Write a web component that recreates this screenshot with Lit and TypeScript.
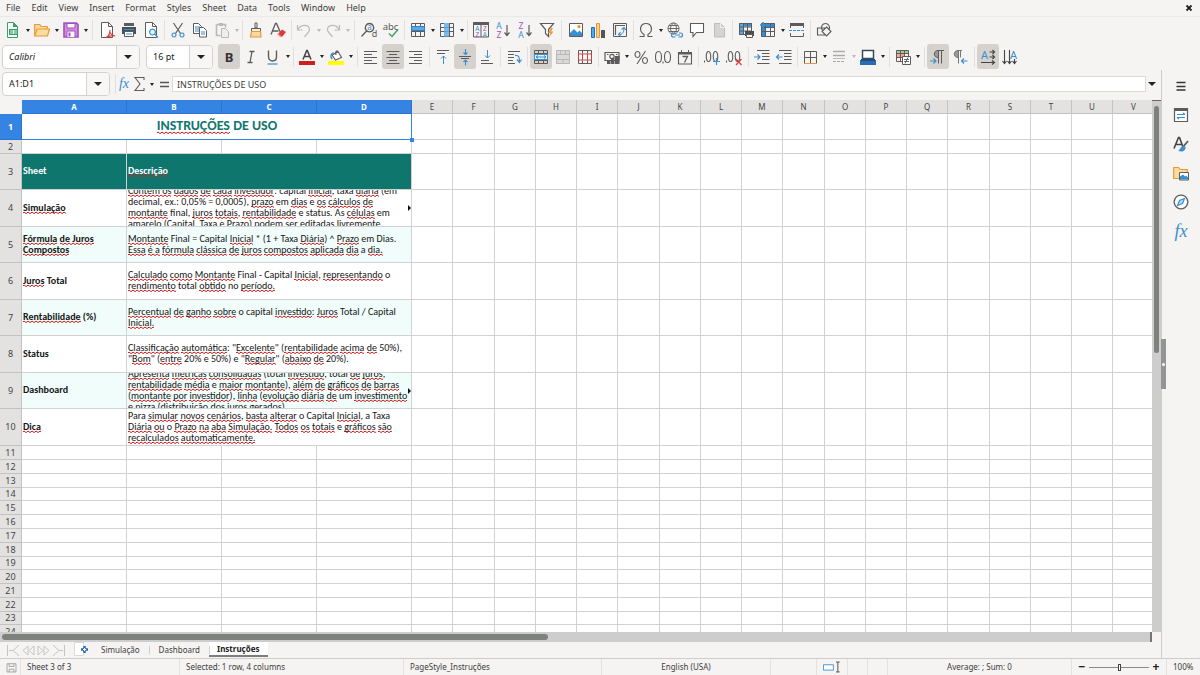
import { LitElement, html, svg, css, nothing, TemplateResult, SVGTemplateResult } from "lit";
import { customElement, property } from "lit/decorators.js";
import { classMap } from "lit/directives/class-map.js";
import { styleMap } from "lit/directives/style-map.js";

const D = "#5c5c5c";
const B = "#3a8fd0";
const R = "#dd3b3b";
const G = "#38a169";
const O = "#e8983a";
const P = "#a44fbd";
const L = "#b9b9b9";

const s = (d: string, c = D, w = 1, fill = "none") =>
  svg`<path d=${d} stroke=${c} stroke-width=${w} fill=${fill}></path>`;
const f = (d: string, c = D) => svg`<path d=${d} fill=${c}></path>`;
const t = (x: number, y: number, size: number, c: string, text: string, anchor = "middle") =>
  svg`<text x=${x} y=${y} font-size=${size} fill=${c} text-anchor=${anchor}>${text}</text>`;

const page = "M2.5 .5h7l4 4v11h-11z";
const grid = "M1.5 1.5h13v13h-13zM1.5 5.5h13M1.5 9.5h13M5.5 1.5v13M10.5 1.5v13";

const icons: Record<string, () => SVGTemplateResult | SVGTemplateResult[]> = {
  new: () => [s("M2.5 .5h6l4 4v11h-10z", G, 1, "#fff"), f("M8 0l5 5h-5z", G), f("M4 7h9v6h-9z", G), s("M5 9h7M5 11h7M8.5 8v4", "#d8f3e2")],
  open: () => [s("M.7 13.5v-11h5l1.5 2h6v3", O, 1.2, "#fbdc9f"), s("M.7 14l2.5-7h12.3l-2 7z", O, 1.2, "#fbdc9f")],
  save: () => [s("M1 1h12.5l1.5 1.5v12.500h-14z", P, 1.6, "#cf8ddd"), s("M4 1.500h8v4.500h-8z", P, 1, "#fff"), s("M4 15v-6h8v6", P, 1, "#fff"), f("M5.500 10.500h2v4h-2z", P)],
  pdf: () => [s("M2.5 .5h7l4 4v11h-11z", D, 1, "#fff"), s("M9.500 .5v4h4"), s("M7 15.500c2-1 4-4 4-7.500-1 3 2 5.500 5 6-3-1-6 0-9 1.500z", R, 1.1)],
  print: () => [f("M3 1h10v3h-10z", D), f("M1 5h14v7h-14z", "#4a4f55"), s("M3.500 9.500h9v5h-9z", D, 1, "#fff"), s("M3 7.500h10", B), s("M5 12h6", B)],
  preview: () => [s(page, D, 1, "#fff"), s("M9.500 .5v4h4"), s("M9.500 7.200a2.900 2.900 0 1 0 .01 0M11.500 12l3.500 3.500", B, 1.200, "#e6f2fb")],
  cut: () => [s("M3.500 1l7 10.500M12.500 1l-7 10.500", D, 1.200), s("M4 11a2 2 0 1 0 .01 0M12 11a2 2 0 1 0 .01 0", B, 1.200)],
  copy: () => [s("M1.500 1.500h5l3 3v7h-8z", D, 1, "#fff"), s("M3 5h5M3 7h4M3 9h4", B), s("M7.500 5.500h4l3 3v6.500h-7z", D, 1, "#fff"), s("M9 10h4M9 12h4", B)],
  paste: () => [s("M2.500 2.500h9v3M2.500 2.500v11h4", L, 1.600), f("M5 1h4v3h-4z", L), s("M7.500 6.500h4l3 3v6h-7z", L, 1, "#eee")],
  brush: () => [s("M7 1h2v5h-2zM3.500 6.500h9v3h-9z", D, 1, "#f4f1ea"), s("M3.500 9.500l-1 5.500h10.500l-.5-5.500z", O, 1.200, "#fbd9a0")],
  clear: () => [s("M1 12.500l4.500-11h1l4 9M2.500 9h6", D, 1.300), f("M8 12l4-4.500 4 2.500-4 5z", R), f("M7 12.500l1-1 3.500 3.500-1 .5z", "#f2a0a0")],
  undo: () => [s("M1.500 3v5h5M1.500 8c3-6 11-6 12-1 .5 3-3 5-5 8", L, 1.200)],
  redo: () => [s("M14.500 3v5h-5M14.500 8c-3-6-11-6-12-1-.5 3 3 5 5 8", L, 1.200)],
  find: () => [s("M8.500 1.500a4.200 4.200 0 1 0 .01 0M5.500 9l-5 5.500", D, 1.300), t(8.500, 8.300, 8, B, "a"), t(13.500, 15, 9, D, "d")],
  spell: () => [t(7.500, 7.500, 9.500, D, "abc"), s("M6 11.500l3 3 6-7", G, 1.400)],
  row: () => [s(grid), f("M1 4.500h13.500v4h-13.500z", "#58a9e6"), s("M1 4.500h14M1 8.500h14M1.500 4v5M14.500 4v5", "#2f7fc4")],
  col: () => [s(grid), f("M5 1h5v13.500h-5z", "#79baea"), s("M5 5.500h5M5 9.500h5", "#5b9fd6")],
  sort: () => [s("M.5 1.500h15v13.500h-15zM8 1v14"), f("M0 0h16v3h-16z", D), t(4.300, 9, 6.500, B, "A"), t(4.300, 15, 6.500, P, "Z"), t(11.800, 9, 6.500, P, "Z"), t(11.800, 15, 6.500, B, "A")],
  az: () => [t(4, 7.300, 8.500, B, "A"), t(4, 15.500, 8.500, P, "Z"), s("M12 3v10M9.500 10.500l2.500 3 2.500-3", D, 1.200)],
  za: () => [t(4, 7.300, 8.500, P, "Z"), t(4, 15.500, 8.500, B, "A"), s("M12 3v10M9.500 10.500l2.500 3 2.500-3", D, 1.200)],
  filter: () => [s("M1.500 1.500h13l-5 6v7l-3-3v-4z", D, 1.200, "#fff"), f("M12 6l-3 5h2.500l-1.500 4.500 4.500-6h-2.500l2-3.500z", O)],
  image: () => [s("M1.500 1.500h13v13h-13z", D, 1, "#fff"), f("M2 14v-3l4-4 3.500 3.500 2-2 2.500 2.500v3z", B), f("M11 3a1.600 1.600 0 1 0 .01 0", O)],
  chart: () => [s("M1.500 5.500h3v10h-3z", "#1f6fb5", 1, "#58a9e6"), s("M6.500 1.500h3v14h-3z", O, 1, "#fbd08a"), f("M11 8h4v8h-4z", "#555")],
  pivot: () => [s("M1.500 1.500h13v13h-13z"), s("M3 3.500h10M3.500 3v10", D, 1.200), s("M6.500 12.500c4.500 0 5.500-2 5.500-6M9.500 7.500l2.500-2 2 2.500M8.500 10l-2 2.500 2.500 2", B, 1.100)],
  omega: () => [s("M1.500 14.500h4.500v-2c-6-4-3.500-11 2-11s8 7 2 11v2h4.500", D, 1.200)],
  link: () => [s("M6.500 1a5.500 5.500 0 1 0 .01 0M6.500 1c-4 3-4 8 0 11M6.500 1c4 3 4 8 0 11M1 6.500h11M2 3.500h9M2 9.500h9", D, .900), s("M8 11h-1.500a2 2 0 0 0 0 4h2M12 11h1.500a2 2 0 0 1 0 4h-2M8 13h5", B, 1.200)],
  comment: () => [s("M1.500 1.500h13v9h-7l-3.500 4v-4h-2.500z", D, 1.100, "#fff")],
  blank: () => [s("M3.500 1.500h6l4 4v9.500h-10z", "#bdbdbd", 1, "#d4d4d4"), s("M9.500 1.500v4h4", "#eee")],
  printarea: () => [f("M1 1h13v3.500h-13z", B), f("M1 1h4v12h-4z", "#58a9e6"), s("M1.500 1.500h12v11h-12zM1.500 5h12M1.500 9h12M5.500 1.500v11M9.500 1.500v11"), f("M7 9h9v5h-9z", "#4a4f55"), s("M8.500 12.500h6v3h-6z", D, 1, "#fff")],
  freeze: () => [f("M1 1h13.500v4.500h-13.500zM1 1h4.500v13.500h-4.500z", "#2f8de0"), s(grid), s("M3 0v6M0 3h6", B, 1.500)],
  split: () => [s("M1.500 6v-4.500h13v4.500M1.500 11v3.500h13v-3.500"), f("M1 1h14v3h-14z"), svg`<path d="M0 8.500h16" stroke=${B} stroke-dasharray="3 1" fill="none"></path>`],
  shapes: () => [s("M1.500 6h7v7h-7z", D, 1.100), s("M9.500 1.500a4 4 0 1 0 .01 0", D, 1.100), s("M10.500 5l4.500 4.500-4.500 4.500-4.500-4.500z", D, 1.100, "#f4f4f4")],
  bold: () => t(8, 13, 13, "#333", "B"),
  italic: () => [s("M6.500 2.500h5M4.500 13.500h5M9 2.500l-2 11", D, 1.300)],
  underline: () => [s("M3.500 1.500v6c0 6 8 6 8 0v-6", D, 1.400), s("M2.500 15h10", B, 1.200)],
  fontcolor: () => [s("M4 10.500l3.700-9h.6l3.700 9M5.500 7.500h5", "#444", 1.500), f("M0 12h16v4h-16z", "#c9211e")],
  fill: () => [s("M5 5.500l5-3 3.500 6-6 2.500-3.500-5z", D, 1.100, "#fff"), s("M4 10c-2-3-1-5.500 2-6", B, 1.500), s("M8 6c-1-5 2-5 2-2", D, 1.200), f("M0 12h16v4h-16z", "#ffff00")],
  left: () => s("M1 2.500h13M1 5.500h8M1 8.500h13M1 11.500h8M1 14.500h13"),
  center: () => s("M1.500 2.500h13M4 5.500h8M1.500 8.500h13M4 11.500h8M1.500 14.500h13"),
  right: () => s("M2 2.500h13M7 5.500h8M2 8.500h13M7 11.500h8M2 14.500h13"),
  top: () => [s("M2 1.500h12M2 4.500h8", D), s("M8.500 7v8M6 9.500l2.500-2.500 2.500 2.500", B)],
  middle: () => [s("M2 7.500h12M4 9.500h8"), s("M8.500 0v5.500M6.500 3.500l2 2 2-2M8.500 16.500v-5M6.500 13l2-2 2 2", B, 1.100)],
  bottom: () => [s("M2 11.500h8M2 14.500h12"), s("M8.500 1v8M6 6.500l2.500 2.500 2.500-2.500", B)],
  wrap: () => [s("M2 2.500h12M2 5.500h6M2 8.500h6M2 11.500h5M2 14.500h7"), s("M9 6.500c4-.5 4.500 2 4.500 6M11 10.500l2.500 3 2-3", B, 1.200)],
  merge: () => [s("M1.500 1.500h13v13h-13zM1.500 4.500h13M1.500 11.500h13M5.500 1.500v3M10.500 1.500v3M5.500 11.500v3M10.500 11.500v3", D), s("M1.500 5.500h13v5h-13zM3 8h10M5 6.500l-2 1.500 2 1.500M11 6.500l2 1.500-2 1.500", B, 1, "#e6f2fb")],
  unmerge: () => [f("M1 1h14v14h-14z", "#d9d9d9"), s("M1.500 1.500h13v13h-13zM1.500 5.500h13M1.500 10.500h13M5.500 1.500v4M10.500 1.500v4M8 10.500v4", L)],
  splitcell: () => [s("M1.500 1.500h13v13h-13zM5.500 1.500v3M10.500 1.500v3M5.500 11.500v3M10.500 11.500v3"), s("M1.500 5h13v6h-13zM5.500 5v6M10.500 5v6", R, 1, "#fff")],
  currency: () => [s("M1 3.500h14v8h-14z", D, 1.200), s("M8 5.300a2.200 2.200 0 1 0 .01 0M3 5.500h1.500M12 5.500h1.500", D, 1.200), f("M7 9h3.500v6h-3.500zM11 7h4.500v8h-4.500zM3 12h3.500v3h-3.500z")],
  percent: () => [s("M4.500 2.500a2.500 3 0 1 0 .01 0M12 8.500a2.500 3 0 1 0 .01 0M12.500 2l-8.500 13", D, 1.100)],
  number: () => [s("M3.500 2.500c-4 0-4 11 0 11s4-11 0-11M12.500 2.500c-4 0-4 11 0 11s4-11 0-11M8 12.500v2", D, 1.100)],
  date: () => [s("M1.500 3.500h13v11.500h-13z", D, 1.100), s("M1 4.500h14", D, 2), s("M4.500 1v3M11.500 1v3"), s("M5.500 7.500h5l-3 6", D, 1.300)],
  adddec: () => [s("M4.500 2.500c-3 0-3 10 0 10s3-10 0-10M11.500 2.500c-3 0-3 10 0 10s3-10 0-10M.5 11.500v2", D, 1.100), s("M12.500 9v7M9 12.500h7", B, 1.200)],
  deldec: () => [s("M4.500 2.500c-3 0-3 10 0 10s3-10 0-10M11.500 2.500c-3 0-3 10 0 10s3-10 0-10M.5 11.500v2", D, 1.100), s("M10 10l5.500 6M15.500 10l-5.500 6", R, 1.200)],
  indent: () => [s("M3 1.500h12.500M8 4.500h7.500M8 7.500h7.500M8 10.500h7.500M3 14.500h12.500"), s("M0 8h6M3.500 5.500l2.500 2.500-2.500 2.500", B, 1.200)],
  outdent: () => [s("M3 1.500h12.500M8 4.500h7.500M8 7.500h7.500M8 10.500h7.500M3 14.500h12.500"), s("M.5 8h6M3 5.500l-2.500 2.500 2.500 2.500", B, 1.200)],
  borders: () => [s("M2.500 14.500v-12h12v12M8.500 2v13M2 8.500h12", D, 1), s("M2 14.500h13", O)],
  borderstyle: () => [s("M2 2.500h12M2 6.500h12", "#aaa", 1.500), s("M2 9.500h12", "#bbb"), s("M2 12.500h3M6 12.500h3M10 12.500h3", "#aaa")],
  bordercolor: () => [s("M2.500 1.500h11v8h-11z", "#3a4b5c", 1.500, "#fff"), f("M0 11h16v5h-16z", "#2b6cb0"), f("M1 10h14v2h-14z", "#1c4e80")],
  conditional: () => [f("M1 1h13v3.500h-13z", "#8fd3a5"), f("M1 5h9v4h-9z", "#f0a59d"), s("M1.500 1.500h12v11h-12zM1.500 4.500h12M1.500 8.500h12M5.500 1.500v11M9.500 1.500v11", "#6b5a55"), s("M7.500 7.500h8v8h-8z", D, 1, "#fff"), s("M9 10.500h5M9 12.500h5M13 8.500l-3 6", D, .900)],
  ltr: () => [f("M8 1.500c-5 0-5 7 0 7z", "#999"), s("M14 1.500h-6c-5 0-5 7 0 7M8.500 1.500v13M11.500 1.500v13"), s("M0 12h6M3.500 9.500l2.500 2.500-2.500 2.500", B, 1.200)],
  rtl: () => [f("M6 1.500c-5 0-5 7 0 7z", "#999"), s("M10 1.500h-4c-5 0-5 7 0 7M6.500 1.500v13M8.500 1.500v7", "#777"), s("M9.500 12h6M12 9.500l-2.500 2.500 2.500 2.500", B, 1.200)],
  horiz: () => [t(4.500, 9.500, 11, B, "A"), s("M9.500 3h5M12.500 1l2 2-2 2M9.500 8h5M12.500 6l2 2-2 2M1 13.500h13.500M12 11.500l2.500 2-2.500 2", "#444", 1.100)],
  vert: () => [t(11.500, 9.500, 11, B, "A"), s("M2.500 1v13.500M.5 12l2 2.500 2-2.500M7.500 1v13.500M5.500 12l2 2.500 2-2.500M12.500 10v4.500M10.500 12l2 2.500 2-2.500", "#444", 1.100)],
  menu: () => s("M3.500 4.500h9M3.500 8.500h9M3.500 12h9", "#333", 1.500),
  properties: () => [s("M1.500 1.500h13v13h-13z", D, 1.200, "#fff"), f("M1 1h14v3h-14z"), s("M4 7.500h8M10 6l2 1.500M4 10.500h8M6 12l-2-1.500", B, 1.200)],
  stylesdeck: () => [s("M1 12.500l4.500-11h1l4 11M2.500 8.500h7", "#444", 1.600), s("M15 5l-5 6", D, 1.800), f("M11 10c-4 0-3 4-6 4.500 4 2.500 8 0 7.500-3.500z", B)],
  gallery: () => [s("M.7 13.500v-11h5l1.500 2h7v9z", O, 1.200, "#fbdc9f"), s("M6.500 7.500h9v7.500h-9z", D, 1, "#fff"), f("M7 14.500v-3l3-2 2 2 1-1 2 2v2z", B)],
  navigator: () => [s("M8 1.200a6.800 6.800 0 1 0 .01 0", D, 1.200, "#fff"), s("M11.500 4.500l-2 5-5 2 2-5z", B, 1.200, "#b8dcf5")],
  sigma: () => s("M12 4v-2.500h-9l5 6.500-5 6.500h9v-2.500", D, 1.100),
  equal: () => s("M4 6.500h9M4 10.500h9", "#555", 1.500),
  floppy: () => [s("M1.500 2.500h13v12h-13zM4.500 2.500v4h7v-4M4.500 14.500v-4h7v4", "#999", 1.200)],
};

const rich = (text: string): (TemplateResult | string)[] =>
  text.split("_").map((part, i) => (i % 2 ? html`<span class="typo">${part}</span>` : part));

@customElement("x-icon")
class XIcon extends LitElement {
  @property() name = "";
  static styles = css`
    :host { display: block; width: 16px; height: 16px; flex: none; }
    svg { display: block; width: 100%; height: 100%; overflow: visible; font-family: "Noto Sans", sans-serif; }
    .strong { font-weight: 700; }
  `;
  render() {
    return html`<svg viewBox="0 0 16 16" class=${classMap({ strong: this.name === "bold" })} aria-hidden="true">${icons[this.name]?.()}</svg>`;
  }
}

const bar1 = "new> open> save> |7 pdf print preview |5 cut copy paste>- |5 brush clear |4 undo>- redo>- |7 find spell |5 row> col> |5 sort az za filter |7 image chart pivot |4 omega> link comment blank |5 printarea freeze> split |5 shapes";
const bar2 = "bold* italic underline> |5 fontcolor> fill> |6 left center* right |6 top middle* bottom |5 wrap |5 merge* unmerge splitcell |5 currency> percent number date |5 adddec deldec |6 indent outdent |4 borders> borderstyle>- bordercolor> |6 conditional> |6 ltr* rtl |6 horiz* vert";

interface Row { n: number; h: number; label: string; lines: string[]; tint?: boolean; more?: boolean }

const rows: Row[] = [
  { n: 4, h: 37, label: "_Simulação_", more: true, lines: ["_Contém os_ _dados_ _de_ _cada_ _investidor_: capital _inicial_, taxa _diária_ (em", "decimal, ex.: 0,05% = 0,0005), _prazo_ em _dias_ e _os_ _cálculos_ _de_", "_montante_ final, _juros_ _totais_, _rentabilidade_ e status. As _células_ em", "_amarelo_ (Capital, Taxa e _Prazo_) _podem_ ser _editadas_ _livremente_."] },
  { n: 5, h: 36, tint: true, label: "_Fórmula_ _de Juros_\n_Compostos_", lines: ["_Montante_ Final = Capital _Inicial_ * (1 + Taxa _Diária_) ^ _Prazo_ em Dias.", "_Essa_ _é a_ _fórmula_ _clássica_ _de_ _juros_ _compostos_ _aplicada_ _dia_ a _dia._"] },
  { n: 6, h: 37, label: "_Juros_ Total", lines: ["_Calculado_ _como_ _Montante_ Final - Capital _Inicial_, _representando_ o", "_rendimento_ total _obtido_ no _período._"] },
  { n: 7, h: 36, tint: true, label: "_Rentabilidade_ (%)", lines: ["_Percentual_ _de_ _ganho_ _sobre_ o capital _investido_: _Juros_ Total / Capital", "_Inicial._"] },
  { n: 8, h: 37, label: "Status", lines: ["_Classificação_ _automática_: \"_Excelente_\" (_rentabilidade_ _acima_ _de_ 50%),", "\"_Bom_\" (_entre_ 20% e 50%) e \"_Regular_\" (_abaixo_ _de_ 20%)."] },
  { n: 9, h: 36, tint: true, more: true, label: "Dashboard", lines: ["_Apresenta_ _métricas_ _consolidadas_ (total _investido_, total _de_ _juros_,", "_rentabilidade_ _média_ e _maior_ _montante_), _além_ _de_ _gráficos_ _de_ _barras_", "(_montante_ _por_ _investidor_), _linha_ (_evolução_ _diária_ _de_ um _investimento_", "e pizza (_distribuição_ _dos_ _juros_ _gerados_)."] },
  { n: 10, h: 37, label: "_Dica_", lines: ["Para _simular_ _novos_ _cenários_, _basta_ _alterar_ o Capital _Inicial_, a Taxa", "_Diária_ _ou_ o _Prazo_ _na_ _aba_ _Simulação._ _Todos_ _os_ _totais_ e _gráficos_ _são_", "_recalculados_ _automaticamente._"] },
];

@customElement("app-root")
class AppRoot extends LitElement {
  static styles = css`
    * { box-sizing: border-box; }
    :host { display: flex; flex-direction: column; height: 100vh; overflow: hidden; background: #f5f4f2; color: #3d3d3d; font: 9px/12px "Noto Sans", sans-serif; }
    button, input { font: inherit; color: inherit; margin: 0; padding: 0; border: 0; background: none; min-width: 0; }
    button { display: flex; align-items: center; justify-content: center; }
    .menubar { display: flex; align-items: center; flex: none; height: 17px; padding: 0 7px 0 1px; border-bottom: 1px solid #ebe9e7; }
    .menubar button { padding: 0 6px 0 5px; height: 16px; }
    .menubar .close { margin-left: auto; padding: 0; }
    .bar { display: flex; align-items: center; flex: none; height: 26px; padding-left: 2px; }
    .bar + .bar { height: 27px; }
    .tool { width: 22px; height: 25px; flex: none; border-radius: 3px; }
    .on { background: #d5d1cd; }
    .drop { width: 7px; height: 22px; flex: none; }
    .caret { border: 2px solid transparent; border-top: 3px solid #222; border-bottom: 0; }
    .faint { border-top-color: #b9b9b9; }
    .sep { flex: none; height: 20px; display: flex; justify-content: center; }
    .sep::before { content: ""; width: 1px; background: #e2e0de; }
    .combo { display: flex; flex: none; height: 24px; background: #fff; border: 1px solid #d5d1cd; border-radius: 4px; overflow: hidden; }
    .combo input { flex: 1; padding-left: 6px; color: #222; }
    .combo button { width: 23px; border-left: 1px solid #d5d1cd; background: #f8f7f6; }
    .combo .caret, .wide { border-width: 4px 4px 0; }
    .font { width: 138px; margin-right: 6px; }
    .font input { font-style: italic; }
    .size { width: 67px; margin-right: 5px; }
    .name { width: 108px; margin-right: 5px; }
    .main { display: flex; flex: 1; min-height: 0; }
    .work { display: flex; flex-direction: column; flex: 1; min-width: 0; }
    .formula { display: flex; align-items: center; flex: none; height: 30px; padding: 1px 3px 3px 2px; }
    .formula .tool { width: 16px; }
    .fx { width: 16px; justify-content: center; font: italic 14px/16px "Liberation Serif", serif; color: #3a8fd0; }
    .formula .eq { width: 17px; }
    .line { flex: 1; height: 16px; background: #fff; border: 1px solid #dcdad8; padding-left: 4px; }
    .expand { width: 12px; height: 16px; }
    .sheet { display: flex; flex: 1; min-height: 0; }
    .view { flex: 1; min-width: 0; overflow: hidden; background: #fff; }
    table { border-collapse: separate; border-spacing: 0; table-layout: fixed; width: 0; line-height: 11px; }
    th, td { padding: 0; border: solid #d2d2d2; border-width: 0 1px 1px 0; overflow: hidden; }
    thead th { height: 14px; font: 8px/13px "Noto Sans", sans-serif; background: #e3e2e1; border-color: #c4c3c2; color: #444; }
    tbody th { font: 9px/12px "Noto Sans", sans-serif; background: #e3e2e1; border-color: #c4c3c2; color: #444; }
    .corner { background: #f5f4f2; border-color: #f5f4f2; }
    thead .sel, tbody .sel { background: #3584e4; border-color: #2b74cf; color: #fff; font-weight: 700; }
    .cell { display: flex; align-items: center; overflow: hidden; position: relative; padding: 0 0 2px 1px; font-family: Carlito, Lato, sans-serif; font-size: 10px; color: #161616; white-space: pre; }
    .strong { font-weight: 700; }
    .title { justify-content: center; font-size: 14px; line-height: 16px; font-weight: 700; color: #0f766e; }
    td.picked { border-color: #3584e4; overflow: visible; position: relative; }
    .handle { position: absolute; right: -3px; bottom: -3px; width: 4px; height: 4px; background: #3584e4; z-index: 1; }
    .head { background: #0f766e; }
    .head .cell { color: #fff; font-weight: 700; }
    .tint { background: #f0fdfa; }
    .typo { background: url("data:image/svg+xml,%3Csvg xmlns='http://www.w3.org/2000/svg' width='4' height='3'%3E%3Cpath d='M0 2L1 1L3 2.500L4 2' fill='none' stroke='%23d02020' stroke-width='1'/%3E%3C/svg%3E") repeat-x left bottom; }
    .more { position: absolute; right: 0; top: 50%; margin-top: -3px; border: 3px solid transparent; border-left: 3px solid #111; border-right: 0; }
    .vbar { flex: none; width: 9px; background: #cdcdcd; border-top: 1px solid #666; padding: 5px 2px 0 2px; }
    .vthumb { background: #7f817f; border-radius: 3px; }
    .hbar { flex: none; height: 10px; background: #cdcdcd; padding: 2px 11px 2px 2px; margin-right: 9px; border-right: 2px solid #777; }
    .hthumb { height: 6px; background: #7f817f; border-radius: 3px; }
    .tabs { display: flex; flex: none; height: 16px; font-size: 8px; padding-left: 6px; }
    .nav { width: 15px; color: #c4c4c4; }
    .nav svg, .add svg { display: block; }
    .add { width: 15px; height: 15px; margin: 0 3px 0 7px; }
    .tab { padding: 0 9px 0 10px; height: 15px; position: relative; }
    .tab + .tab::before { content: ""; position: absolute; left: 0; top: 4px; height: 8px; width: 1px; background: #d0cecc; }
    .tab.active { padding: 0 8px; background: #fff; font-weight: 700; color: #222; border-bottom: 2px solid #7d7d7d; }
    .side { position: relative; flex: none; width: 39px; border-left: 1px solid #cfcdcb; padding-top: 1px; display: flex; flex-direction: column; align-items: center; }
    .side button { width: 29px; height: 29px; }
    .side .fx { font-size: 18px; }
    .grip { position: absolute; left: -1px; top: 269px; width: 5px; height: 50px; background: #939594; display: flex; align-items: center; justify-content: center; }
    .grip::before { content: ""; width: 3px; height: 3px; border-radius: 50%; background: #fff; }
    .status { display: grid; grid-template-columns: 21px 159fr 224fr 198fr 169fr 46px 31px 20px 20px 184fr 95px 33px; flex: none; height: 17px; border-top: 1px solid #cfcdcb; font-size: 8px; }
    .status > * { display: flex; align-items: center; padding: 0 6px; border-right: 1px solid #e4e2e0; white-space: nowrap; }
    .status > *:last-child { border: 0; }
    .status .mid { justify-content: center; }
    .status x-icon { width: 11px; height: 11px; }
    .zoom { gap: 3px; }
    .zoom button { width: 8px; flex: none; font: 700 12px/12px "Noto Sans", sans-serif; color: #222; }
    .zoom input { appearance: none; flex: 1; height: 12px; background: linear-gradient(#8a8a8a, #8a8a8a) center / 100% 1px no-repeat; }
    .zoom input::-webkit-slider-thumb { appearance: none; width: 3px; height: 7px; border: 1px solid #444; background: #fff; }
  `;

  private tools(spec: string) {
    return spec.split(" ").map((tok) => {
      if (tok[0] === "|") return html`<span class="sep" style=${styleMap({ width: tok.slice(1) + "px" })}></span>`;
      const name = tok.replace(/[>*-]/g, "");
      return html`<button class=${classMap({ tool: true, on: tok.includes("*") })} aria-label=${name}><x-icon name=${name}></x-icon></button>${tok.includes(">")
        ? html`<button class="drop" aria-label="${name} options"><span class=${classMap({ caret: true, faint: tok.includes("-") })}></span></button>` : nothing}`;
    });
  }

  private combo(cls: string, label: string, value: string) {
    return html`<div class="combo ${cls}"><input aria-label=${label} .value=${value}><button aria-label="${label} list"><span class="caret"></span></button></div>`;
  }

  private blanks(from: number) {
    return Array.from({ length: 22 - from }, () => html`<td></td>`);
  }

  private cell(h: number, cls: string, content: unknown) {
    return html`<div class="cell ${cls}" style=${styleMap({ height: h - 1 + "px" })}>${content}</div>`;
  }

  private table() {
    const letters = [..."ABCDEFGHIJKLMNOPQRSTUV"];
    const widths = [22, 105, 95, 95, 95, ...letters.slice(4).map((_, i) => (i % 4 === 1 ? 42 : 41))];
    const tail = [14, 14, 14, 13, 14, 14, 14, 14, 13, 14, 14, 14, 13, 14];
    return html`<table>
      <colgroup>${widths.map((w) => html`<col style=${styleMap({ width: w + "px" })}>`)}</colgroup>
      <thead><tr><th class="corner"></th>${letters.map((l, i) => html`<th class=${classMap({ sel: i < 4 })}>${l}</th>`)}</tr></thead>
      <tbody>
        <tr><th class="sel">1</th><td class="picked" colspan="4">${this.cell(26, "title", html`<span>${rich("_INSTRUÇÕES_ DE USO")}</span>`)}<span class="handle"></span></td>${this.blanks(4)}</tr>
        <tr><th>2</th><td>${this.cell(14, "", "")}</td>${this.blanks(1)}</tr>
        <tr><th>3</th><td class="head">${this.cell(36, "strong", "Sheet")}</td><td class="head" colspan="3">${this.cell(36, "", html`<span>${rich("_Descrição_")}</span>`)}</td>${this.blanks(4)}</tr>
        ${rows.map((r) => html`<tr><th>${r.n}</th>
          <td class=${classMap({ tint: !!r.tint })}>${this.cell(r.h, "strong", html`<span>${rich(r.label)}</span>`)}</td>
          <td class=${classMap({ tint: !!r.tint })} colspan="3">${this.cell(r.h, "", html`<span>${rich(r.lines.join("\n"))}</span>${r.more ? html`<span class="more"></span>` : nothing}`)}</td>
          ${this.blanks(4)}</tr>`)}
        ${tail.map((h, i) => html`<tr><th>${i + 11}</th><td>${this.cell(h, "", "")}</td>${this.blanks(1)}</tr>`)}
      </tbody></table>`;
  }

  render() {
    const nav = ["M1.500 1v11M13 1l-6 5.500 6 5.500M3 6.500h4", "M7 2l-5 4.500 5 4.500zM13 2l-5 4.500 5 4.500z", "M2 2l5 4.500-5 4.500zM8 2l5 4.500-5 4.500z", "M13.500 1v11M2 1l6 5.500-6 5.500M8 6.500h4"];
    return html`
      <nav class="menubar">${["File", "Edit", "View", "Insert", "Format", "Styles", "Sheet", "Data", "Tools", "Window", "Help"].map((m) => html`<button>${m}</button>`)}
        <button class="close" aria-label="Close"><svg width="8" height="8" viewBox="0 0 8 8"><path d="M1.500 1.500l5 5M6.500 1.500l-5 5" stroke="#222" stroke-width="1.800"></path></svg></button></nav>
      <div class="bar">${this.tools(bar1)}</div>
      <div class="bar">${this.combo("font", "Font name", "Calibri")}${this.combo("size", "Font size", "16 pt")}${this.tools(bar2)}</div>
      <div class="main">
        <div class="work">
          <div class="formula">${this.combo("name", "Name box", "A1:D1")}<span class="sep"></span>
            <button class="fx" aria-label="Function wizard">fx</button>
            <button class="tool" aria-label="Sum"><x-icon name="sigma"></x-icon></button>
            <button class="drop" aria-label="Sum options"><span class="caret"></span></button>
            <button class="tool eq" aria-label="Formula"><x-icon name="equal"></x-icon></button>
            <input class="line" aria-label="Input line" .value=${"INSTRUÇÕES DE USO"}>
            <button class="expand" aria-label="Expand"><span class="caret wide"></span></button>
          </div>
          <div class="sheet"><div class="view">${this.table()}</div>
            <div class="vbar"><div class="vthumb" style=${styleMap({ height: "47%" })}></div></div></div>
          <div class="hbar"><div class="hthumb" style=${styleMap({ width: "48%" })}></div></div>
          <div class="tabs">${nav.map((d) => html`<button class="nav" aria-label="Sheet navigation"><svg width="15" height="13" viewBox="0 0 15 13"><path d=${d} fill="none" stroke="currentColor"></path></svg></button>`)}
            <button class="add" aria-label="Add sheet"><svg width="15" height="15" viewBox="0 0 15 15"><path d="M1.500 .5h9v13h-9z" fill="#fff" stroke="#dddbd9"></path><path d="M11.500 4v7M8 7.500h7" stroke="#2a6cb8" stroke-width="2.500"></path><path d="M11.500 6v3M10 7.500h3" stroke="#fff"></path></svg></button>
            <button class="tab">Simulação</button><button class="tab">Dashboard</button><button class="tab active">Instruções</button></div>
        </div>
        <div class="side">${["menu", "properties", "stylesdeck", "gallery", "navigator"].map((n) => html`<button aria-label=${n}><x-icon name=${n}></x-icon></button>`)}
          <button class="fx" aria-label="Functions">fx</button><div class="grip"></div></div>
      </div>
      <div class="status"><span><x-icon name="floppy"></x-icon></span><span>Sheet 3 of 3</span><span>Selected: 1 row, 4 columns</span><span>PageStyle_Instruções</span><span class="mid">English (USA)</span><span></span>
        <span><svg width="20" height="12" viewBox="0 0 20 12"><path d="M.5 3.500h11v6h-11z" fill="#fff" stroke="#3a8fd0"></path><path d="M14.500 .5h4M14.500 11.500h4M16.500 .5v11" stroke="#444" fill="none"></path></svg></span>
        <span></span><span></span><span class="mid">Average: ; Sum: 0</span>
        <span class="zoom"><button aria-label="Zoom out">−</button><input type="range" aria-label="Zoom" min="0" max="100" .value=${"50"}><button aria-label="Zoom in">+</button></span><span>100%</span></div>`;
  }
}
